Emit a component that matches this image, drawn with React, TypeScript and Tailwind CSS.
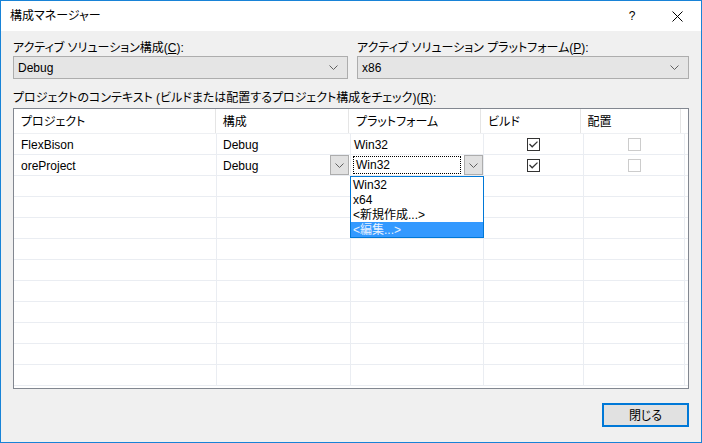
import { useState } from 'react'

const FONT = 'font-["Liberation_Sans","Noto_Sans_CJK_JP",sans-serif] [font-feature-settings:"palt"]'

const COLS = ['w-[203px]', 'w-[134px]', 'w-[133px]', 'w-[100px]', 'w-[101px]', 'flex-1']

function Chevron({ className = '' }: { className?: string }) {
  return (
    <svg width="9" height="5" viewBox="0 0 9 5" className={className}>
      <path d="M0.5 0.5 L4.5 4.5 L8.5 0.5" fill="none" stroke="#606060" strokeWidth="1" />
    </svg>
  )
}

function Select({ value }: { value: string }) {
  return (
    <div className="h-[23px] flex items-center justify-between bg-[#e5e5e5] border border-[#adadad] pl-[4px] pr-[9px]">
      <span className="pt-[1px]">{value}</span>
      <Chevron />
    </div>
  )
}

function Check({ checked, disabled }: { checked?: boolean; disabled?: boolean }) {
  return (
    <div
      className={`w-[13px] h-[13px] bg-white border flex items-center justify-center ${
        disabled ? 'border-[#cccccc]' : 'border-[#333333]'
      }`}
    >
      {checked && (
        <svg width="9" height="7" viewBox="0 0 9 7">
          <path d="M0.5 3 L3.2 5.8 L8.5 0.6" fill="none" stroke="#333" strokeWidth="1.3" />
        </svg>
      )}
    </div>
  )
}

function CellButton() {
  return (
    <div className="w-[19px] h-[20px] bg-[#e1e1e1] border border-[#adadad] flex items-center justify-center">
      <Chevron />
    </div>
  )
}

export default function App() {
  const [selected] = useState(3)
  const items = ['Win32', 'x64', '<新規作成...>', '<編集...>']
  const emptyRows = Array.from({ length: 10 })

  return (
    <div className={`${FONT} w-[702px] h-[443px] border border-[#1883d7] flex flex-col text-[12px] text-black overflow-hidden`}>
      {/* Title bar */}
      <div className="h-[30px] bg-white flex items-center pl-[9px] shrink-0">
        <span className="flex-1 pb-[1px]">構成マネージャー</span>
        <span className="w-[12px] text-center mr-[34px]">?</span>
        <svg width="11" height="11" viewBox="0 0 11 11" className="mr-[18px]">
          <path d="M0.5 0.5 L10.5 10.5 M10.5 0.5 L0.5 10.5" stroke="#000" strokeWidth="1" />
        </svg>
      </div>

      {/* Body */}
      <div className="flex-1 bg-[#f0f0f0] px-[12px] pt-[8px] flex flex-col">
        <div className="flex gap-[9px]">
          <div className="w-[335px] flex flex-col gap-[1px]">
            <span className="h-[16px] leading-[16px] pt-[1px]">アクティブ ソリューション構成(<u>C</u>):</span>
            <Select value="Debug" />
          </div>
          <div className="flex-1 flex flex-col gap-[1px]">
            <span className="h-[16px] leading-[16px] pt-[1px]">アクティブ ソリューション プラットフォーム(<u>P</u>):</span>
            <Select value="x86" />
          </div>
        </div>

        <div className="mt-[10px] h-[16px] leading-[16px] pt-[1px]">
          プロジェクトのコンテキスト (ビルドまたは配置するプロジェクト構成をチェック)(<u>R</u>):
        </div>

        {/* Grid */}
        <div className="mt-[3px] h-[281px] border border-[#828790] bg-white flex flex-col overflow-hidden">
          <div className="h-[25px] flex border-b border-[#eef0f3] shrink-0">
            {['プロジェクト', '構成', 'プラットフォーム', 'ビルド', '配置', ''].map((h, i) => (
              <div key={i} className={`${COLS[i]} ${i < 5 ? 'border-r border-[#e5e5e5]' : ''} pl-[7px] pt-[1px] flex items-center`}>
                {h}
              </div>
            ))}
          </div>

          <div className="h-[21px] flex border-b border-[#eaedf2] shrink-0">
            <div className={`${COLS[0]} border-r border-[#eaedf2] pl-[7px] pt-[1px] flex items-center`}>FlexBison</div>
            <div className={`${COLS[1]} border-r border-[#eaedf2] pl-[6px] pt-[1px] flex items-center`}>Debug</div>
            <div className={`${COLS[2]} border-r border-[#eaedf2] pl-[3px] pt-[1px] flex items-center`}>Win32</div>
            <div className={`${COLS[3]} border-r border-[#eaedf2] flex items-center justify-center`}>
              <Check checked />
            </div>
            <div className={`${COLS[4]} border-r border-[#eaedf2] flex items-center justify-center`}>
              <Check disabled />
            </div>
            <div className={COLS[5]} />
          </div>

          <div className="h-[21px] flex border-b border-[#eaedf2] shrink-0">
            <div className={`${COLS[0]} border-r border-[#eaedf2] pl-[7px] pt-[1px] flex items-center`}>oreProject</div>
            <div className={`${COLS[1]} border-r border-[#eaedf2] pl-[6px] pr-[1px] flex items-center justify-between`}>
              <span className="pt-[1px]">Debug</span>
              <CellButton />
            </div>
            <div className={`${COLS[2]} border-r border-[#eaedf2] pl-[2px] flex items-center relative`}>
              <div className="w-[108px] h-[18px] border border-dotted border-black flex items-center pl-[2px] pt-[1px] mb-[1px]">
                Win32
              </div>
              <div className="ml-auto">
                <CellButton />
              </div>
              {/* Dropdown list */}
              <div className="absolute left-[-1px] top-[21px] w-[134px] border border-[#0078d7] bg-white z-10 flex flex-col">
                {items.map((it, i) => (
                  <div
                    key={it}
                    className={`h-[15px] leading-[15px] pl-[2px] pt-[1px] ${i === selected ? 'bg-[#3399ff] text-[#e8f2ff]' : ''}`}
                  >
                    {it}
                  </div>
                ))}
              </div>
            </div>
            <div className={`${COLS[3]} border-r border-[#eaedf2] flex items-center justify-center`}>
              <Check checked />
            </div>
            <div className={`${COLS[4]} border-r border-[#eaedf2] flex items-center justify-center`}>
              <Check disabled />
            </div>
            <div className={COLS[5]} />
          </div>

          {emptyRows.map((_, r) => (
            <div key={r} className="h-[21px] flex border-b border-[#eaedf2] shrink-0">
              {COLS.map((c, i) => (
                <div key={i} className={`${c} ${i < 5 ? 'border-r border-[#eaedf2]' : ''}`} />
              ))}
            </div>
          ))}
        </div>

        <div className="flex justify-end mt-[14px]">
          <button className="w-[87px] h-[24px] bg-[#e1e1e1] border-2 border-[#0078d7] flex items-center justify-center pt-[1px]">
            閉じる
          </button>
        </div>
      </div>
    </div>
  )
}
